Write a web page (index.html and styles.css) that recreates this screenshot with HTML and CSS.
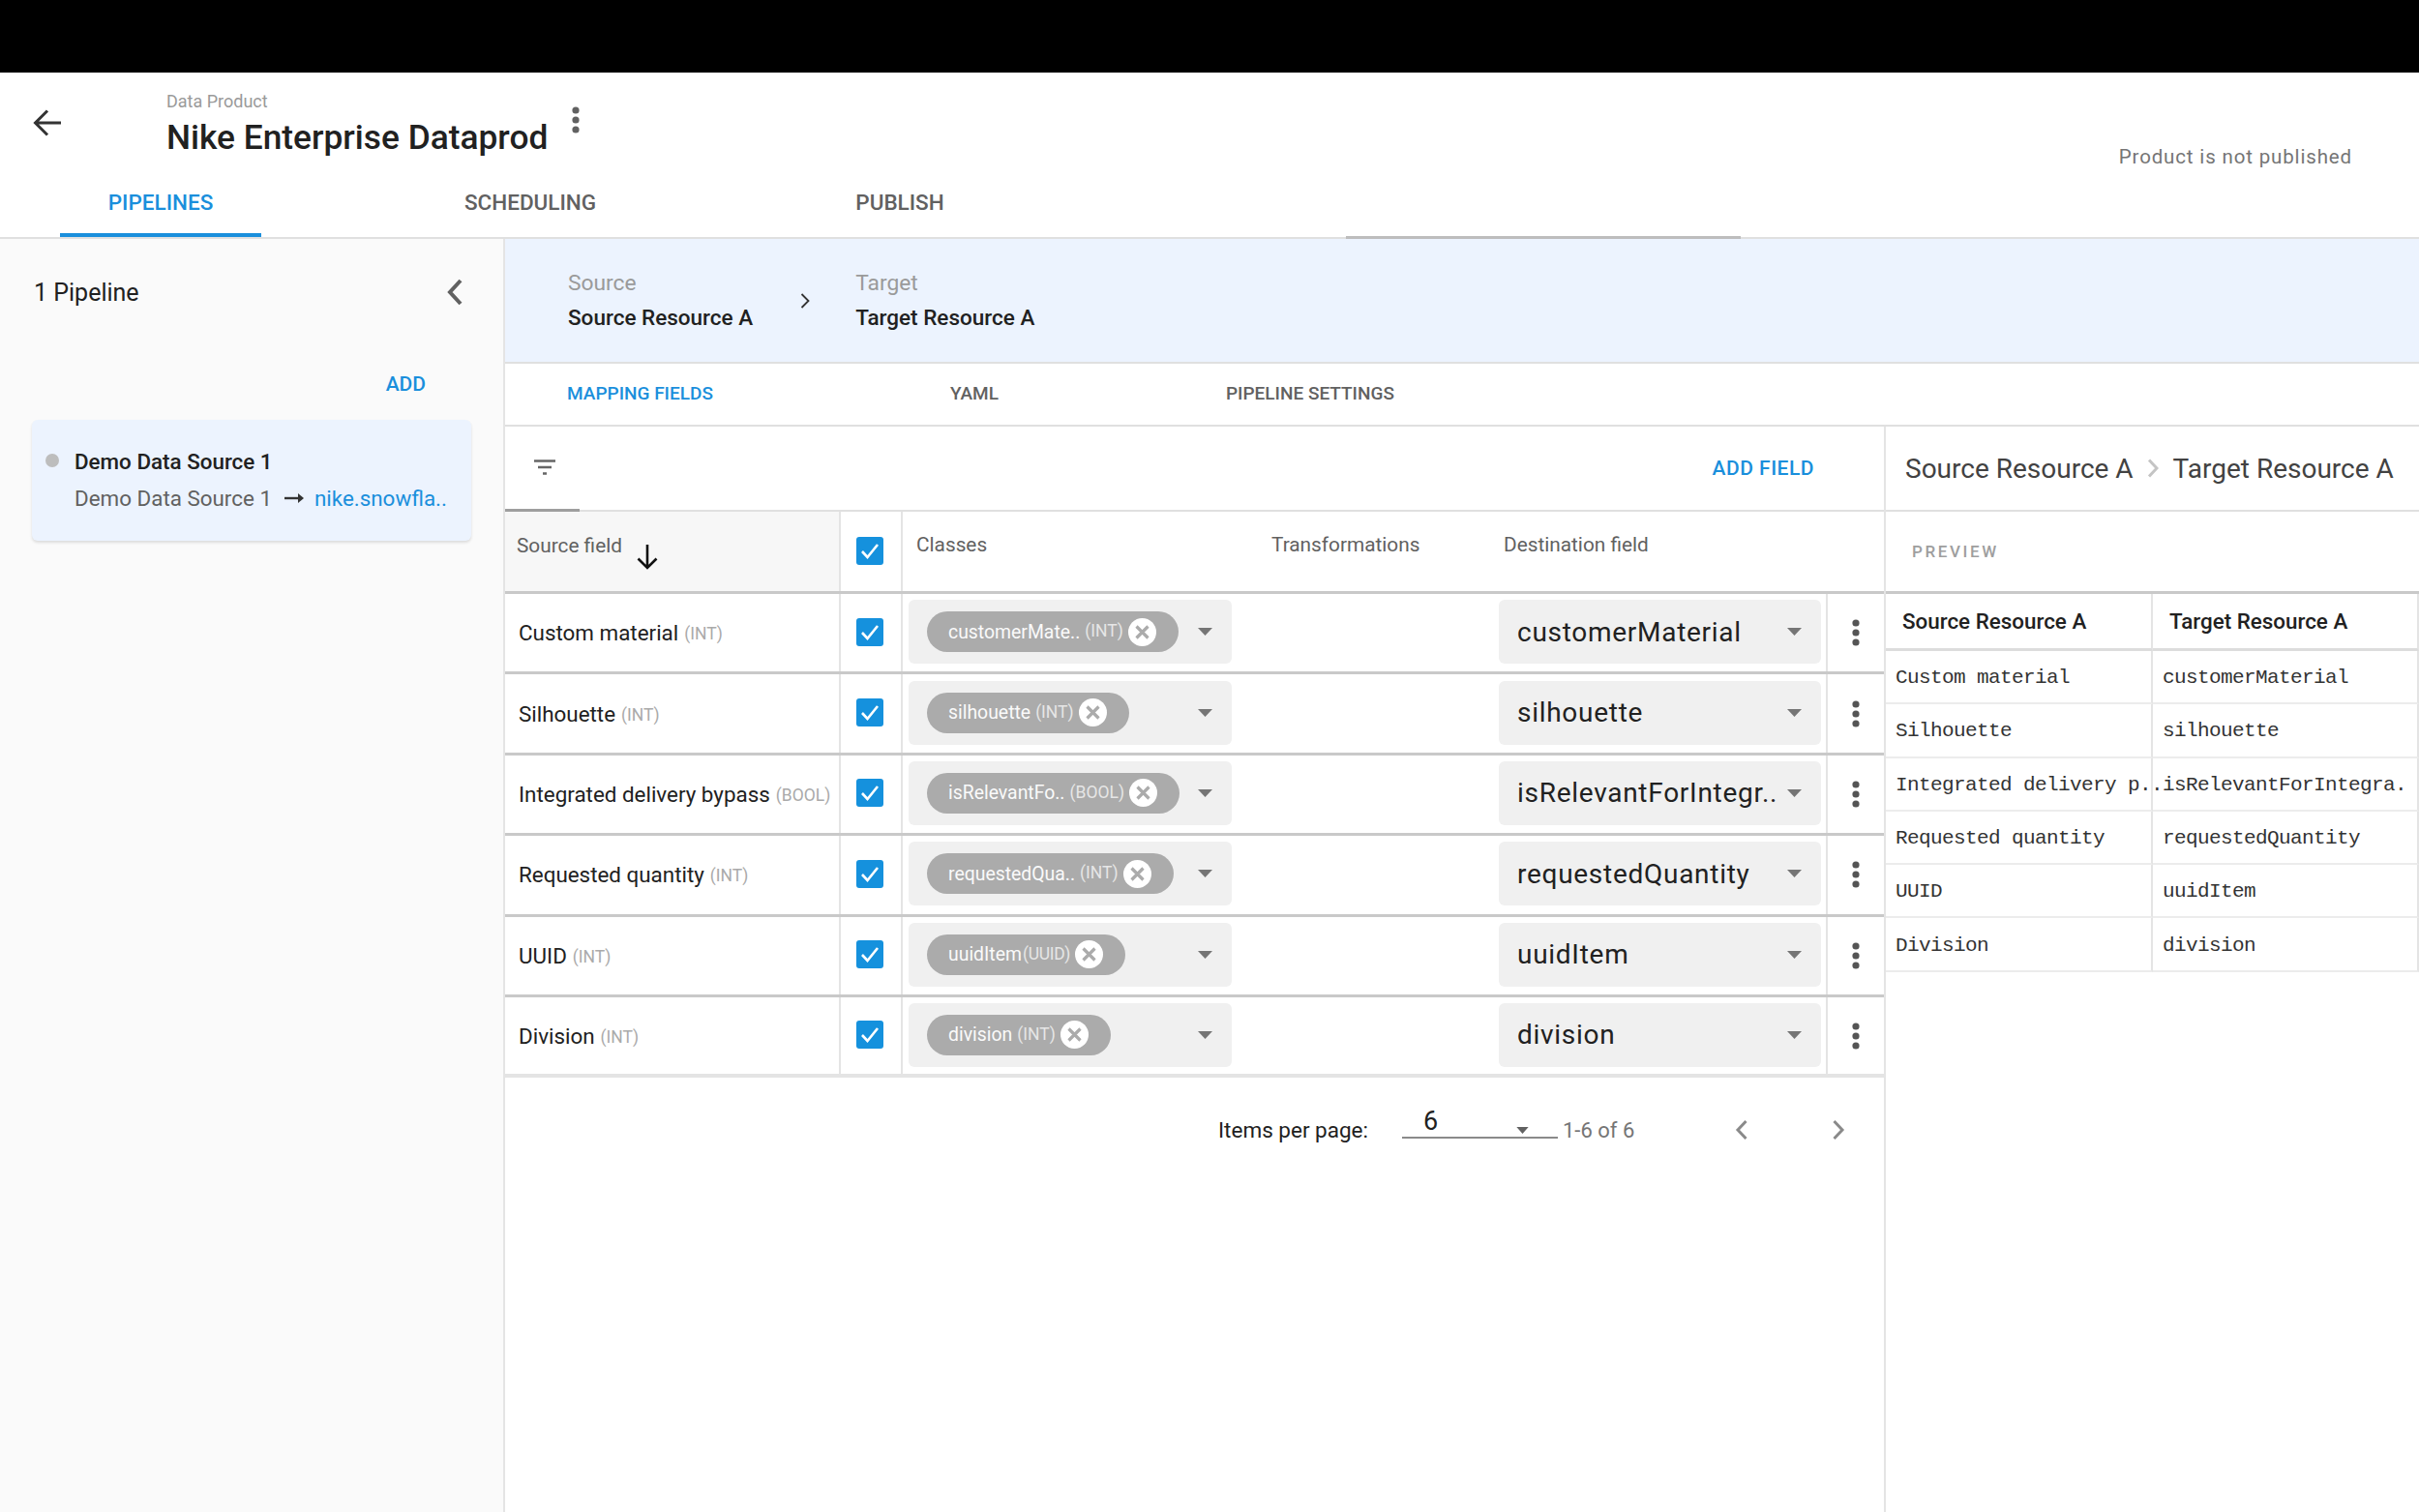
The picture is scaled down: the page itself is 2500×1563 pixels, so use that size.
FILE: index.html
```html
<!DOCTYPE html>
<html lang="en">
<head>
<meta charset="utf-8">
<title>Nike Enterprise Dataprod</title>
<link rel="stylesheet" href="styles.css">
</head>
<body>
<svg class="sprite" width="0" height="0" aria-hidden="true">
  <symbol id="kebab" viewBox="0 0 8 28"><circle cx="4" cy="4" r="3.6"/><circle cx="4" cy="14" r="3.6"/><circle cx="4" cy="24" r="3.6"/></symbol>
  <symbol id="caret" viewBox="0 0 15 8"><path d="M0 0h15L7.500 8z"/></symbol>
  <symbol id="close" viewBox="0 0 29 29"><circle cx="14.500" cy="14.500" r="14.500" fill="#fff"/><path d="M8.500 8.500l12 12M20.500 8.500l-12 12" stroke="#ababab" stroke-width="3.200" fill="none"/></symbol>
  <symbol id="check" viewBox="0 0 28 29"><rect width="28" height="29" rx="3" fill="#1591dd"/><path d="M6 15l5.500 6L22 8" stroke="#fff" stroke-width="2.600" fill="none"/></symbol>
</svg>
<div class="blackbar"></div>
<header class="header">
  <div class="header-top">
    <svg class="back" width="30" height="28" viewBox="0 0 30 28"><path d="M29 14H3M15 1.500L2.500 14 15 26.500" fill="none" stroke="#333" stroke-width="3"/></svg>
    <div class="title-block">
      <div class="eyebrow">Data Product</div>
      <h1 class="title">Nike Enterprise Dataprod</h1>
    </div>
    <svg class="title-kebab"><use href="#kebab"/></svg>
    <div class="status">Product is not published</div>
  </div>
  <nav class="tabs">
    <a class="tab tab-active">PIPELINES</a>
    <a class="tab">SCHEDULING</a>
    <a class="tab">PUBLISH</a>
    <span class="tab-rule"></span>
  </nav>
</header>
<div class="body">
  <aside class="sidebar">
    <div class="side-head">
      <span class="side-title">1 Pipeline</span>
      <svg width="18" height="28" viewBox="0 0 18 28"><path d="M15 2L4 14l11 12" fill="none" stroke="#616161" stroke-width="4"/></svg>
    </div>
    <a class="side-add">ADD</a>
    <div class="card">
      <div class="card-line1"><span class="dot"></span><span class="card-name">Demo Data Source 1</span></div>
      <div class="card-line2"><span>Demo Data Source 1</span>
        <svg width="20" height="12" viewBox="0 0 20 12"><path d="M0 6h15" stroke="#333" stroke-width="2.400"/><path d="M14 1l6 5-6 5z" fill="#333"/></svg>
        <span class="link">nike.snowfla..</span></div>
    </div>
  </aside>
  <main class="main">
    <div class="crumbs">
      <div class="crumb"><span class="crumb-label">Source</span><span class="crumb-value">Source Resource A</span></div>
      <svg class="crumb-arrow" width="10" height="16" viewBox="0 0 10 16"><path d="M1.500 1l7 7-7 7" fill="none" stroke="#333" stroke-width="1.800"/></svg>
      <div class="crumb"><span class="crumb-label">Target</span><span class="crumb-value">Target Resource A</span></div>
    </div>
    <div class="subtabs">
      <a class="subtab subtab-active">MAPPING FIELDS</a>
      <a class="subtab subtab-yaml">YAML</a>
      <a class="subtab">PIPELINE SETTINGS</a>
    </div>
    <div class="work">
      <section class="mapping">
        <div class="toolbar">
          <svg class="filter" width="22" height="16" viewBox="0 0 22 16"><path d="M0 1.500h22M4 8h14M9 14.500h4" stroke="#666" stroke-width="2.400" fill="none"/></svg>
          <a class="add-field">ADD FIELD</a>
        </div>
        <div class="row row-head">
          <div class="cell cell-source head-source">Source field
            <svg class="sort" width="24" height="26" viewBox="0 0 24 26"><path d="M12 0v24M2.500 14.500L12 24l9.500-9.500" fill="none" stroke="#111" stroke-width="2.600"/></svg>
          </div>
          <div class="cell cell-check"><svg class="check"><use href="#check"/></svg></div>
          <div class="cell cell-classes head-cols">
            <span class="col-classes">Classes</span><span class="col-trans">Transformations</span>
          </div>
          <div class="cell head-dest">Destination field</div>
        </div>

        <div class="row">
          <div class="cell cell-source"><span class="field">Custom material</span><span class="type">(INT)</span></div>
          <div class="cell cell-check"><svg class="check"><use href="#check"/></svg></div>
          <div class="cell cell-classes"><div class="selectbox"><span class="chip"><span class="chip-name">customerMate..</span><span class="chip-type">(INT)</span><svg class="chip-x"><use href="#close"/></svg></span><svg class="caret"><use href="#caret"/></svg></div></div>
          <div class="cell cell-dest"><div class="destbox"><span class="dest-text">customerMaterial</span><svg class="caret"><use href="#caret"/></svg></div></div>
          <div class="cell cell-more"><svg class="more"><use href="#kebab"/></svg></div>
        </div>
        <div class="row">
          <div class="cell cell-source"><span class="field">Silhouette</span><span class="type">(INT)</span></div>
          <div class="cell cell-check"><svg class="check"><use href="#check"/></svg></div>
          <div class="cell cell-classes"><div class="selectbox"><span class="chip"><span class="chip-name">silhouette</span><span class="chip-type">(INT)</span><svg class="chip-x"><use href="#close"/></svg></span><svg class="caret"><use href="#caret"/></svg></div></div>
          <div class="cell cell-dest"><div class="destbox"><span class="dest-text">silhouette</span><svg class="caret"><use href="#caret"/></svg></div></div>
          <div class="cell cell-more"><svg class="more"><use href="#kebab"/></svg></div>
        </div>
        <div class="row">
          <div class="cell cell-source"><span class="field">Integrated delivery bypass</span><span class="type">(BOOL)</span></div>
          <div class="cell cell-check"><svg class="check"><use href="#check"/></svg></div>
          <div class="cell cell-classes"><div class="selectbox"><span class="chip"><span class="chip-name">isRelevantFo..</span><span class="chip-type">(BOOL)</span><svg class="chip-x"><use href="#close"/></svg></span><svg class="caret"><use href="#caret"/></svg></div></div>
          <div class="cell cell-dest"><div class="destbox"><span class="dest-text">isRelevantForIntegr..</span><svg class="caret"><use href="#caret"/></svg></div></div>
          <div class="cell cell-more"><svg class="more"><use href="#kebab"/></svg></div>
        </div>
        <div class="row">
          <div class="cell cell-source"><span class="field">Requested quantity</span><span class="type">(INT)</span></div>
          <div class="cell cell-check"><svg class="check"><use href="#check"/></svg></div>
          <div class="cell cell-classes"><div class="selectbox"><span class="chip"><span class="chip-name">requestedQua..</span><span class="chip-type">(INT)</span><svg class="chip-x"><use href="#close"/></svg></span><svg class="caret"><use href="#caret"/></svg></div></div>
          <div class="cell cell-dest"><div class="destbox"><span class="dest-text">requestedQuantity</span><svg class="caret"><use href="#caret"/></svg></div></div>
          <div class="cell cell-more"><svg class="more"><use href="#kebab"/></svg></div>
        </div>
        <div class="row">
          <div class="cell cell-source"><span class="field">UUID</span><span class="type">(INT)</span></div>
          <div class="cell cell-check"><svg class="check"><use href="#check"/></svg></div>
          <div class="cell cell-classes"><div class="selectbox"><span class="chip"><span class="chip-name">uuidItem</span><span class="chip-type chip-type-tight">(UUID)</span><svg class="chip-x"><use href="#close"/></svg></span><svg class="caret"><use href="#caret"/></svg></div></div>
          <div class="cell cell-dest"><div class="destbox"><span class="dest-text">uuidItem</span><svg class="caret"><use href="#caret"/></svg></div></div>
          <div class="cell cell-more"><svg class="more"><use href="#kebab"/></svg></div>
        </div>
        <div class="row row-last">
          <div class="cell cell-source"><span class="field">Division</span><span class="type">(INT)</span></div>
          <div class="cell cell-check"><svg class="check"><use href="#check"/></svg></div>
          <div class="cell cell-classes"><div class="selectbox"><span class="chip"><span class="chip-name">division</span><span class="chip-type">(INT)</span><svg class="chip-x"><use href="#close"/></svg></span><svg class="caret"><use href="#caret"/></svg></div></div>
          <div class="cell cell-dest"><div class="destbox"><span class="dest-text">division</span><svg class="caret"><use href="#caret"/></svg></div></div>
          <div class="cell cell-more"><svg class="more"><use href="#kebab"/></svg></div>
        </div>

        <div class="pager">
          <span class="pager-label">Items per page:</span>
          <div class="pager-select"><span class="pager-value">6</span><svg class="pager-caret" viewBox="0 0 14 8"><path d="M0 0h14L7 8z"/></svg></div>
          <span class="pager-range">1-6 of 6</span>
          <svg class="pager-prev" width="14" height="22" viewBox="0 0 14 22"><path d="M11.500 2L3 11l8.500 9" fill="none" stroke="#8a8a8a" stroke-width="3"/></svg>
          <svg class="pager-next" width="14" height="22" viewBox="0 0 14 22"><path d="M2.500 2L11 11l-8.500 9" fill="none" stroke="#8a8a8a" stroke-width="3"/></svg>
        </div>
      </section>
      <aside class="preview">
        <div class="preview-title"><span>Source Resource A</span>
          <svg width="12" height="20" viewBox="0 0 12 20"><path d="M2 1.500l8 8.500-8 8.500" fill="none" stroke="#c4c4c4" stroke-width="3"/></svg>
          <span>Target Resource A</span></div>
        <div class="preview-label">PREVIEW</div>
        <div class="ptable">
          <div class="pcell phead">Source Resource A</div><div class="pcell phead">Target Resource A</div>
          <div class="pcell">Custom material</div><div class="pcell">customerMaterial</div>
          <div class="pcell">Silhouette</div><div class="pcell">silhouette</div>
          <div class="pcell">Integrated delivery p..</div><div class="pcell">isRelevantForIntegra.</div>
          <div class="pcell">Requested quantity</div><div class="pcell">requestedQuantity</div>
          <div class="pcell">UUID</div><div class="pcell">uuidItem</div>
          <div class="pcell">Division</div><div class="pcell">division</div>
        </div>
      </aside>
    </div>
  </main>
</div>
</body>
</html>
```
FILE: styles.css
```css
* { box-sizing: border-box; }
html, body { margin: 0; height: 100%; }
body {
  width: 2500px; height: 1563px; overflow: hidden; background: #fff;
  font-family: Roboto, "Liberation Sans", sans-serif; color: #212121;
  display: flex; flex-direction: column;
}
.sprite { position: absolute; }
.blackbar { height: 75px; background: #000; flex: none; }

/* header */
.header { flex: none; height: 172px; border-bottom: 2px solid #e0e0e0; display: flex; flex-direction: column; }
.header-top { height: 96px; display: flex; align-items: flex-start; }
.back { margin: 38px 0 0 34px; flex: none; }
.title-block { margin: 20px 0 0 108px; }
.eyebrow { font-size: 18px; line-height: 20px; color: #9a9a9a; }
.title { margin: 6px 0 0; font-size: 35.300px; line-height: 42px; font-weight: 500; color: #212121; }
.title-kebab { width: 8px; height: 28px; fill: #616161; margin: 35px 0 0 25px; flex: none; }
.status { margin: 75px 69px 0 auto; font-size: 20.500px; line-height: 24px; letter-spacing: .85px; color: #757575; }
.tabs { flex: 1; display: flex; padding-left: 62px; }
.tab { width: 208px; margin-right: 174px; text-align: center; font-size: 22.500px; line-height: 28px; font-weight: 500; color: #616161; padding-top: 24px; border-bottom: 4px solid transparent; height: 74px; }
.tab-active { color: #1a8fdc; border-bottom-color: #1a8fdc; }
.tab-rule { width: 408px; height: 3px; background: #bdbdbd; align-self: flex-end; margin: 0 0 -2px 183px; }

.body { flex: 1; display: flex; min-height: 0; }
.sidebar { width: 522px; flex: none; background: #fafafa; border-right: 2px solid #e4e4e4; padding: 0 33px; }
.side-head { height: 110px; display: flex; align-items: center; justify-content: space-between; padding: 0 8px 0 2px; }
.side-title { font-size: 25px; }
.side-add { display: block; text-align: right; padding-right: 47px; margin-top: 28px; font-size: 21px; line-height: 24px; font-weight: 500; color: #1a8fdc; }
.card { margin-top: 25px; height: 125px; width: 454px; background: #ecf3fe; border-radius: 6px; box-shadow: 0 2px 3px rgba(0,0,0,.12); padding: 28px 0 0 14px; }
.card-line1 { display: flex; align-items: center; height: 30px; }
.dot { width: 14px; height: 14px; border-radius: 50%; background: #bdbdbd; margin-right: 16px; margin-top: -2px; }
.card-name { font-size: 22.400px; font-weight: 500; color: #212121; }
.card-line2 { display: flex; align-items: center; height: 30px; margin: 8px 0 0 30px; font-size: 22.400px; color: #616161; gap: 13px; white-space: nowrap; }
.link { color: #1a8fdc; margin-left: -2px; }

.main { flex: 1; min-width: 0; display: flex; flex-direction: column; }
.crumbs { height: 129px; flex: none; background: #ecf3fe; border-bottom: 2px solid #e0e0e0; display: flex; align-items: center; padding-left: 65px; }
.crumb { display: flex; flex-direction: column; gap: 11px; }
.crumb-label { font-size: 22.800px; line-height: 24px; color: #9a9a9a; }
.crumb-value { font-size: 22.500px; line-height: 24px; font-weight: 500; color: #212121; white-space: nowrap; }
.crumb-arrow { margin: 0 47px 0 49px; }
.subtabs { height: 65px; flex: none; border-bottom: 2px solid #e0e0e0; display: flex; align-items: center; padding: 0 0 3px 64px; }
.subtab { font-size: 19px; font-weight: 500; color: #616161; margin-right: 245px; white-space: nowrap; }
.subtab-active { color: #1a8fdc; }
.subtab-yaml { margin-right: 235px; }

.work { flex: 1; display: flex; min-height: 0; }
.mapping { width: 1425px; flex: none; }
.toolbar { height: 88px; border-bottom: 2px solid #e0e0e0; position: relative; display: flex; align-items: center; justify-content: space-between; padding: 0 72px 0 30px; }
.toolbar::after { content: ""; position: absolute; left: 0; bottom: -2px; width: 77px; height: 3px; background: #9e9e9e; }
.filter { flex: none; margin-bottom: 2px; }
.add-field { font-size: 21px; font-weight: 500; color: #1a8fdc; letter-spacing: .5px; }

.row { display: grid; grid-template-columns: 347px 64px 616px 340px 58px; height: 83.400px; border-bottom: 3px solid #c9c9c9; }
.row-head { height: 85px; }
.row-last { border-bottom: 4px solid #e4e4e4; }
.cell { display: flex; align-items: center; min-width: 0; }
.cell-source { border-right: 2px solid #e4e4e4; padding-left: 14px; white-space: nowrap; }
.cell-check { border-right: 2px solid #e4e4e4; justify-content: center; padding-right: 2px; padding-bottom: 2px; }
.check { width: 28px; height: 29px; flex: none; }
.cell-classes { padding: 0 0 2px 6px; }
.cell-dest { border-right: 2px solid #e4e4e4; padding-bottom: 2px; }
.cell-more { justify-content: center; }
.head-source { background: #f7f7f7; font-size: 20.800px; color: #616161; padding-left: 12px; align-items: flex-start; padding-top: 23px; line-height: 24px; }
.sort { margin: 11px 0 0 14px; flex: none; }
.head-cols { align-items: flex-start; padding: 22px 0 0 14px; font-size: 20.800px; line-height: 24px; color: #616161; white-space: nowrap; }
.col-classes { width: 367px; flex: none; }
.head-dest { align-items: flex-start; padding: 22px 0 0 5px; font-size: 20.800px; line-height: 24px; color: #616161; white-space: nowrap; }
.field { font-size: 22.400px; color: #212121; }
.type { font-size: 17.500px; color: #aaa; margin-left: 6px; position: relative; top: 1px; }
.selectbox { width: 334px; height: 66px; background: #f0f0f0; border-radius: 6px; display: flex; align-items: center; justify-content: space-between; padding: 0 20px 0 19px; }
.chip { height: 42px; border-radius: 21px; background: #ababab; display: inline-flex; align-items: center; padding: 0 23px 0 22px; color: #fff; white-space: nowrap; }
.chip-name { font-size: 19.400px; color: #fafafa; }
.chip-type { font-size: 17.500px; margin-left: 5px; color: #e6e6e6; position: relative; top: -1px; }
.chip-type-tight { margin-left: 1px; letter-spacing: -.3px; }
.chip-x { width: 29px; height: 29px; margin-left: 5px; flex: none; }
.caret { width: 15px; height: 8px; fill: #757575; flex: none; }
.destbox { width: 333px; height: 66px; background: #f0f0f0; border-radius: 6px; display: flex; align-items: center; justify-content: space-between; padding: 0 20px 0 19px; }
.dest-text { font-size: 28px; letter-spacing: .72px; color: #212121; white-space: nowrap; }
.more { width: 8px; height: 28px; fill: #555; }

.pager { height: 108px; display: flex; align-items: center; padding: 0 0 0 737px; }
.pager-label { font-size: 22.500px; color: #212121; width: 190px; flex: none; }
.pager-select { width: 161px; height: 36px; border-bottom: 2px solid #8a8a8a; position: relative; flex: none; margin-bottom: 18px; }
.pager-value { position: absolute; left: 22px; top: 2px; font-size: 27px; line-height: 32px; color: #212121; }
.pager-caret { position: absolute; right: 30px; top: 24px; width: 13px; height: 7px; fill: #616161; }
.pager-range { font-size: 22px; color: #757575; margin-left: 5px; width: 178px; flex: none; }
.pager-next { margin-left: 86px; }

.preview { flex: 1; min-width: 0; border-left: 2px solid #e4e4e4; }
.preview-title { height: 88px; border-bottom: 2px solid #e0e0e0; display: flex; align-items: center; padding-left: 20px; gap: 14.500px; font-size: 28px; color: #424242; white-space: nowrap; }
.preview-label { height: 85px; padding: 31px 0 0 27px; font-size: 17px; line-height: 20px; letter-spacing: 2.600px; color: #9e9e9e; font-weight: 500; border-bottom: 3px solid #c9c9c9; }
.ptable { display: grid; grid-template-columns: 276px 275px; grid-template-rows: 59px repeat(6, 55.300px); }
.pcell { display: flex; align-items: center; padding: 2px 0 0 10px; border-bottom: 2px solid #ececec; border-right: 2px solid #e4e4e4; font-family: "Liberation Mono", monospace; font-size: 21px; letter-spacing: -.6px; color: #333; white-space: nowrap; }
.phead { font-family: Roboto, sans-serif; font-size: 22.400px; font-weight: 500; letter-spacing: 0; color: #212121; padding: 0 0 0 17px; border-bottom: 3px solid #dcdcdc; }
```
